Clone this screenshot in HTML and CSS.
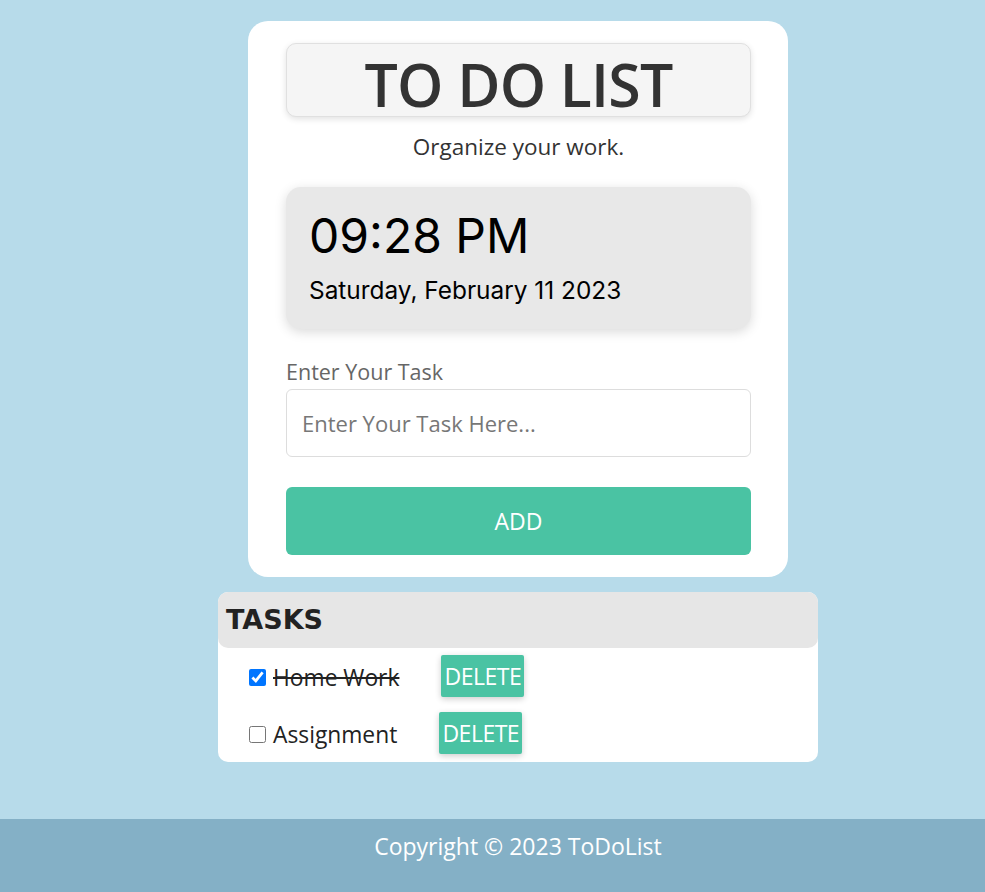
FILE: index.html
```html
<!DOCTYPE html>
<html>
<head>
<meta charset="utf-8">
<link rel="stylesheet" href="styles.css">
</head>
<body>
<main class="page">
  <section class="card">
    <h1 class="title">TO DO LIST</h1>
    <p class="subtitle">Organize your work.</p>
    <div class="clock">
      <div class="time">09:28 PM</div>
      <div class="date">Saturday, February 11 2023</div>
    </div>
    <label class="label" for="task">Enter Your Task</label>
    <input class="input" id="task" type="text" placeholder="Enter Your Task Here...">
    <button class="add">ADD</button>
  </section>
  <section class="tasks">
    <h2 class="tasks-head">TASKS</h2>
    <div class="task-list">
      <div class="row">
        <input type="checkbox" class="check" checked>
        <span class="task-name done">Home Work</span>
        <button class="del">DELETE</button>
      </div>
      <div class="row">
        <input type="checkbox" class="check">
        <span class="task-name">Assignment</span>
        <button class="del">DELETE</button>
      </div>
    </div>
  </section>
</main>
<footer class="footer">Copyright © 2023 ToDoList</footer>
</body>
</html>
```
FILE: styles.css
```css
* { box-sizing: border-box; }
html, body { margin: 0; padding: 0; }
body {
  background: #b7dbea;
  font-family: "Open Sans", "Noto Sans", sans-serif;
  color: #333;
  min-height: 892px;
  display: flex;
  flex-direction: column;
}
.page {
  display: flex;
  flex-direction: column;
  align-items: center;
  padding: 21px 0 0 51px;
  flex: 1;
}
.card {
  width: 540px;
  background: #fff;
  border-radius: 20px;
  padding: 22px 37px 22px 38px;
  display: flex;
  flex-direction: column;
}
.title {
  margin: 0;
  height: 74px;
  background: #f5f5f5;
  border: 1px solid #e0e0e0;
  border-radius: 10px;
  box-shadow: 0 2px 6px rgba(0,0,0,0.12);
  text-align: center;
  font-size: 59px;
  font-weight: 600;
  line-height: 80px;
  color: #333;
  letter-spacing: -0.8px;
}
.subtitle {
  margin: 15px 0 0;
  text-align: center;
  font-size: 22.5px;
  line-height: 30px;
  color: #333;
}
.clock {
  margin-top: 25px;
  height: 142px;
  background: #e8e8e8;
  border-radius: 15px;
  box-shadow: 0 3px 12px rgba(0,0,0,0.15);
  padding: 20px 23px;
  font-family: Inter, sans-serif;
  color: #000;
}
.time { font-size: 48px; line-height: 58px; }
.date { font-size: 24.4px; line-height: 30px; margin-top: 10px; }
.label {
  margin-top: 29px;
  font-size: 21.5px;
  line-height: 28px;
  color: #666;
}
.input {
  margin-top: 3px;
  height: 68px;
  border: 1px solid #ddd;
  border-radius: 6px;
  padding: 0 15px;
  font-family: inherit;
  font-size: 22px;
  color: #333;
  outline: none;
}
.input::placeholder { color: #777; }
.add {
  margin-top: 30px;
  height: 68px;
  border: none;
  border-radius: 6px;
  background: #4ac3a3;
  color: #fff;
  font-family: inherit;
  font-size: 23px;
}
.tasks {
  margin-top: 15px;
  width: 600px;
  background: #fff;
  border-radius: 10px;
}
.tasks-head {
  margin: 0;
  height: 56px;
  background: #e6e6e6;
  border-radius: 10px;
  padding-left: 8px;
  font-family: "DejaVu Sans", Verdana, sans-serif;
  font-weight: bold;
  font-size: 27px;
  line-height: 56px;
  color: #222;
}
.task-list {
  display: flex;
  flex-direction: column;
  gap: 15px;
  padding: 7px 0 8px 31px;
}
.row {
  display: flex;
  align-items: center;
  height: 42px;
}
.check {
  margin: 2px 7px 0 0;
  width: 17px;
  height: 17px;
}
.task-name {
  font-size: 22.8px;
  color: #222;
  padding-top: 3px;
}
.done { text-decoration: line-through; }
.del {
  margin-left: 42px;
  height: 42px;
  width: 83px;
  border: none;
  border-radius: 2px;
  background: #4ac3a3;
  color: #fff;
  font-family: inherit;
  font-size: 23px;
  padding: 0;
  letter-spacing: -0.5px;
  box-shadow: 0 2px 6px rgba(0,0,0,0.2);
}
.footer {
  height: 73px;
  background: #84b0c6;
  color: #fff;
  font-size: 23px;
  line-height: 30px;
  text-align: center;
  padding: 12px 0 0 51px;
}
```
